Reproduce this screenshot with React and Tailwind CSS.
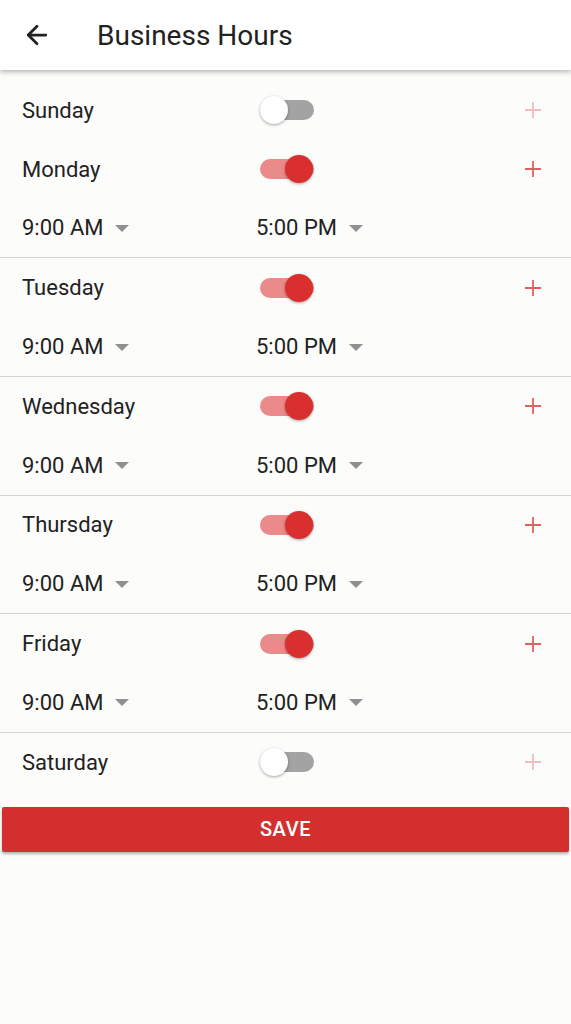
import { ArrowLeft } from 'lucide-react'

const DAYS = [
  { name: 'Sunday', open: false },
  { name: 'Monday', open: true },
  { name: 'Tuesday', open: true },
  { name: 'Wednesday', open: true },
  { name: 'Thursday', open: true },
  { name: 'Friday', open: true },
  { name: 'Saturday', open: false },
]

function Toggle({ on }) {
  return (
    <div className="relative w-[54px] h-[28px] flex items-center">
      <div className={`w-full h-[20px] rounded-full ${on ? 'bg-[#eb8a8a]' : 'bg-[#a3a3a3]'}`} />
      <div
        className={`absolute top-0 w-[28px] h-[28px] rounded-full shadow-[0_1px_3px_rgba(0,0,0,0.35)] ${
          on ? 'left-[25px] bg-[#d9302f]' : 'left-0 bg-white'
        }`}
      />
    </div>
  )
}

function Caret() {
  return (
    <svg width="14" height="8" viewBox="0 0 14 8" className="ml-3 mt-0.5">
      <path d="M0 0 L14 0 L7 7 Z" fill="#8f8f8f" />
    </svg>
  )
}

function Plus({ faded }) {
  return (
    <svg width="16" height="16" viewBox="0 0 16 16" className={faded ? 'opacity-40' : ''}>
      <path d="M8 0 V16 M0 8 H16" stroke="#e0605f" strokeWidth="1.8" />
    </svg>
  )
}

function DayBlock({ day }) {
  return (
    <div className={day.open ? 'border-b border-[#d4d4d4]' : ''}>
      <div className="h-[58.8px] flex items-center px-[22px]">
        <span className="w-[238px] text-[22px] text-[#222]">{day.name}</span>
        <Toggle on={day.open} />
        <div className="ml-auto mr-[8px] flex items-center">
          <Plus faded={!day.open} />
        </div>
      </div>
      {day.open && (
        <div className="h-[58.8px] flex items-center px-[22px] text-[22px] text-[#222]">
          <div className="w-[234px] flex items-center">
            9:00 AM
            <Caret />
          </div>
          <div className="flex items-center">
            5:00 PM
            <Caret />
          </div>
        </div>
      )}
    </div>
  )
}

export default function App() {
  return (
    <div className="min-h-[1024px] bg-[#fcfcfb] font-['Roboto',sans-serif]">
      <header className="h-[70px] bg-white flex items-center shadow-[0_2px_5px_rgba(0,0,0,0.28)] relative z-10">
        <div className="w-[97px] flex pl-[22px]">
          <ArrowLeft size={30} strokeWidth={2.2} className="text-[#222]" />
        </div>
        <h1 className="text-[28px] text-[#222] pt-[2px]">Business Hours</h1>
      </header>

      <div className="pt-[11px]">
        {DAYS.map((d) => (
          <DayBlock key={d.name} day={d} />
        ))}
      </div>

      <div className="px-[2px] mt-[15px]">
        <button className="w-full h-[45px] bg-[#d32f2f] text-white text-[20px] tracking-[0.03em] font-medium rounded-[2px] shadow-[0_2px_3px_rgba(0,0,0,0.3)]">
          SAVE
        </button>
      </div>
    </div>
  )
}
